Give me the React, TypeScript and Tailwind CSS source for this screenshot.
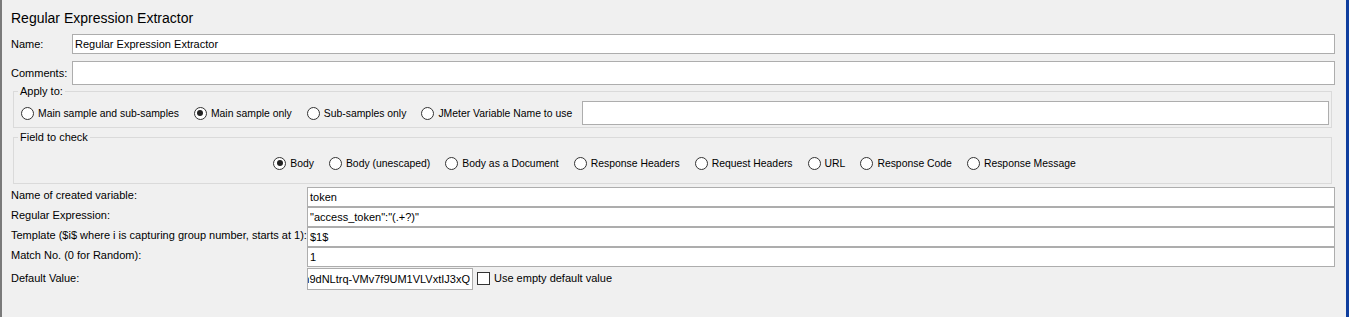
import React from "react";

function Radio({ label, checked }: { label: string; checked?: boolean }) {
  return (
    <label className="flex shrink-0 items-center gap-[4px] whitespace-nowrap">
      <span className="flex h-[13px] w-[13px] items-center justify-center rounded-full border border-[#333333] bg-white">
        {checked && <span className="h-[6px] w-[6px] rounded-full bg-[#222222]" />}
      </span>
      <span className="text-[10.4px] leading-[13px]">{label}</span>
    </label>
  );
}

function TextBox({ value, className = "" }: { value?: string; className?: string }) {
  return (
    <div
      className={`flex items-center overflow-hidden border border-[#adadad] bg-white pl-[2px] whitespace-nowrap ${className}`}
    >
      {value}
    </div>
  );
}

export default function App() {
  const applyTo = [
    { label: "Main sample and sub-samples" },
    { label: "Main sample only", checked: true },
    { label: "Sub-samples only" },
    { label: "JMeter Variable Name to use" },
  ];

  const fields = [
    { label: "Body", checked: true },
    { label: "Body (unescaped)" },
    { label: "Body as a Document" },
    { label: "Response Headers" },
    { label: "Request Headers" },
    { label: "URL" },
    { label: "Response Code" },
    { label: "Response Message" },
  ];

  const rows = [
    { label: "Name of created variable:", value: "token" },
    { label: "Regular Expression:", value: '"access_token":"(.+?)"' },
    { label: "Template ($i$ where i is capturing group number, starts at 1):", value: "$1$" },
    { label: "Match No. (0 for Random):", value: "1" },
  ];

  return (
    <div className="flex h-[317px] w-[1349px] bg-[#f0f0f0] font-['Liberation_Sans',Arial,sans-serif] text-[11px] text-black">
      {/* left splitter edge */}
      <div className="w-[2px] bg-[#7a7a7a]" />

      <div className="flex flex-1 flex-col pr-[11px] pl-[9px]">
        {/* Title */}
        <div className="h-[34px] pt-[10px] text-[14px] leading-[16px]">Regular Expression Extractor</div>

        {/* Name */}
        <div className="flex h-[20px] items-center">
          <div className="w-[61px]">Name:</div>
          <TextBox value="Regular Expression Extractor" className="h-[20px] flex-1" />
        </div>

        {/* Comments */}
        <div className="mt-[7px] flex h-[24px] items-center">
          <div className="w-[61px]">Comments:</div>
          <TextBox className="h-[24px] flex-1" />
        </div>

        {/* Apply to */}
        <fieldset className="mr-[3px] ml-[2px] border border-[#dadada] pr-[2px] pb-[2px] pl-[4px]">
          <legend className="px-[2px] leading-[12px]">Apply to:</legend>
          <div className="mt-[4px] flex h-[24px] items-center gap-[15px] pl-[3px]">
            {applyTo.map((r) => (
              <Radio key={r.label} label={r.label} checked={r.checked} />
            ))}
            <TextBox className="-ml-[5px] h-[24px] flex-1" />
          </div>
        </fieldset>

        {/* Field to check */}
        <fieldset className="mt-[3px] mr-[3px] ml-[2px] border border-[#dadada] pl-[4px]">
          <legend className="px-[2px] leading-[12px]">Field to check</legend>
          <div className="flex h-[40px] items-center justify-center gap-[15px]">
            {fields.map((r) => (
              <Radio key={r.label} label={r.label} checked={r.checked} />
            ))}
          </div>
        </fieldset>

        {/* Extractor settings */}
        <div className="mt-[3px] flex flex-col">
          {rows.map((r) => (
            <div key={r.label} className="flex h-[20px] items-center">
              <div className="w-[296px] pb-[3px] whitespace-nowrap">{r.label}</div>
              <TextBox value={r.value} className="h-[20px] flex-1" />
            </div>
          ))}
          <div className="mt-[1px] flex items-start">
            <div className="w-[296px] pt-[2px]">Default Value:</div>
            <div className="flex h-[22px] w-[166px] items-center justify-end overflow-hidden border border-[#adadad] bg-white pr-[2px] whitespace-nowrap">
              n9dNLtrq-VMv7f9UM1VLVxtIJ3xQ
            </div>
            <label className="mt-[4px] ml-[4px] flex items-center gap-[4px]">
              <span className="h-[13px] w-[13px] border border-[#333333] bg-white" />
              <span className="leading-[13px]">Use empty default value</span>
            </label>
          </div>
        </div>
      </div>

      {/* right window edge */}
      <div className="w-[3px] bg-[#0f3e9e]" />
    </div>
  );
}
